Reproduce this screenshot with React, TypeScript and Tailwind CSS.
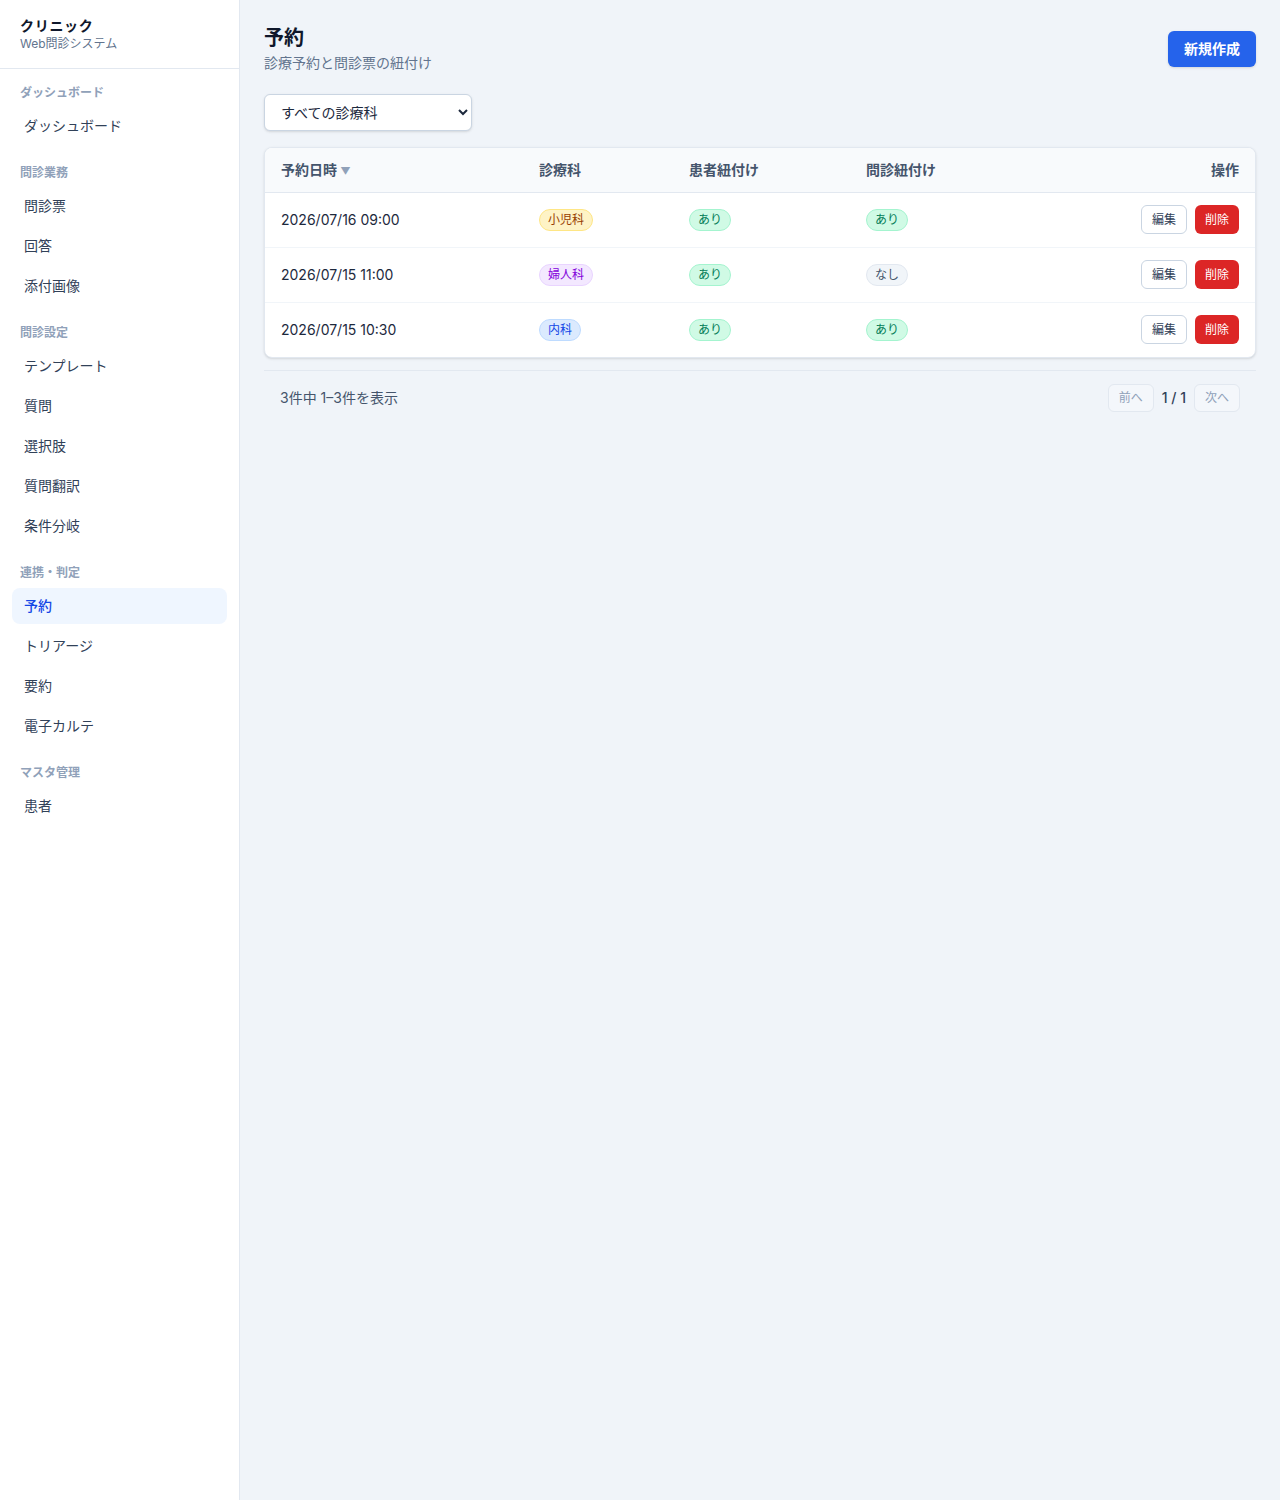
import React from 'react';

type NavSection = { label: string; items: string[] };

const sections: NavSection[] = [
  { label: 'ダッシュボード', items: ['ダッシュボード'] },
  { label: '問診業務', items: ['問診票', '回答', '添付画像'] },
  { label: '問診設定', items: ['テンプレート', '質問', '選択肢', '質問翻訳', '条件分岐'] },
  { label: '連携・判定', items: ['予約', 'トリアージ', '要約', '電子カルテ'] },
  { label: 'マスタ管理', items: ['患者'] },
];

type Dept = '小児科' | '婦人科' | '内科';

const deptStyles: Record<Dept, string> = {
  '小児科': 'bg-amber-100 text-amber-800 border-amber-200',
  '婦人科': 'bg-purple-100 text-purple-700 border-purple-200',
  '内科': 'bg-blue-100 text-blue-700 border-blue-200',
};

const rows: { date: string; dept: Dept; patient: boolean; form: boolean }[] = [
  { date: '2026/07/16 09:00', dept: '小児科', patient: true, form: true },
  { date: '2026/07/15 11:00', dept: '婦人科', patient: true, form: false },
  { date: '2026/07/15 10:30', dept: '内科', patient: true, form: true },
];

function Pill({ className, children }: { className: string; children: React.ReactNode }) {
  return (
    <span className={`inline-flex items-center h-[22px] px-2 rounded-full border text-xs ${className}`}>
      {children}
    </span>
  );
}

function LinkBadge({ on }: { on: boolean }) {
  return on ? (
    <Pill className="bg-emerald-100 text-emerald-700 border-emerald-200">あり</Pill>
  ) : (
    <Pill className="bg-slate-100 text-slate-600 border-slate-200">なし</Pill>
  );
}

function Sidebar() {
  return (
    <aside className="w-[240px] shrink-0 bg-white border-r border-slate-200 min-h-[1500px]">
      <div className="px-5 py-4 border-b border-slate-200">
        <div className="text-sm font-bold text-slate-900 leading-5 tracking-wider">クリニック</div>
        <div className="text-xs text-slate-500 leading-4">Web問診システム</div>
      </div>
      <nav className="px-3 pt-4">
        {sections.map((s, i) => (
          <div key={s.label} className={i === 0 ? '' : 'mt-[21px]'}>
            <div className="px-2 mb-[7px] text-xs leading-4 font-semibold text-slate-400">{s.label}</div>
            {s.items.map((item) => {
              const active = item === '予約';
              return (
                <div
                  key={item}
                  className={`h-9 mb-1 px-3 flex items-center rounded-lg text-sm ${
                    active ? 'bg-blue-50 text-blue-700 font-medium' : 'text-slate-700'
                  }`}
                >
                  {item}
                </div>
              );
            })}
          </div>
        ))}
      </nav>
    </aside>
  );
}

export default function App() {
  return (
    <div
      className="flex w-[1280px] min-h-[1500px] bg-[#f0f4f9]"
      style={{ fontFamily: '"Inter", "Noto Sans CJK JP", sans-serif' }}
    >
      <Sidebar />
      <main className="flex-1 px-6 pt-6">
        <div className="flex items-center justify-between">
          <div>
            <h1 className="text-xl leading-7 font-bold text-slate-900">予約</h1>
            <p className="mt-px text-sm leading-5 text-slate-500">診療予約と問診票の紐付け</p>
          </div>
          <button className="h-9 px-4 rounded-md bg-[#2563eb] text-white text-sm font-semibold shadow-sm">
            新規作成
          </button>
        </div>

        <div className="mt-[21px]">
          <select className="w-[208px] h-[37px] pl-3 pr-2 rounded-md border border-slate-300 bg-white text-sm text-slate-800 shadow-sm">
            <option>すべての診療科</option>
          </select>
        </div>

        <div className="mt-4 bg-white border border-slate-200 rounded-lg shadow-sm overflow-hidden">
          <table className="w-full text-sm">
            <colgroup>
              <col className="w-[258px]" />
              <col className="w-[150px]" />
              <col className="w-[177px]" />
              <col />
              <col />
            </colgroup>
            <thead>
              <tr className="bg-slate-50 border-b border-slate-200 text-slate-600 text-sm font-bold">
                <th className="h-11 px-4 text-left font-bold">
                  予約日時 <span className="text-[10px] text-slate-400">▼</span>
                </th>
                <th className="h-11 px-4 text-left font-bold">診療科</th>
                <th className="h-11 px-4 text-left font-bold">患者紐付け</th>
                <th className="h-11 px-4 text-left font-bold">問診紐付け</th>
                <th className="h-11 px-4 text-right font-bold">操作</th>
              </tr>
            </thead>
            <tbody>
              {rows.map((r, i) => (
                <tr key={r.date} className={i < rows.length - 1 ? 'border-b border-slate-100' : ''}>
                  <td className="h-[55px] px-4 text-slate-800">{r.date}</td>
                  <td className="px-4">
                    <Pill className={deptStyles[r.dept]}>{r.dept}</Pill>
                  </td>
                  <td className="px-4">
                    <LinkBadge on={r.patient} />
                  </td>
                  <td className="px-4">
                    <LinkBadge on={r.form} />
                  </td>
                  <td className="px-4">
                    <div className="flex justify-end gap-2">
                      <button className="h-[29px] px-2.5 rounded-md border border-slate-300 bg-white text-xs text-slate-700">
                        編集
                      </button>
                      <button className="h-[29px] px-2.5 rounded-md bg-[#dc2626] text-xs text-white">削除</button>
                    </div>
                  </td>
                </tr>
              ))}
            </tbody>
          </table>
        </div>

        <div className="mt-3 border-t border-slate-200 pt-[13px] px-4 flex items-center justify-between">
          <span className="text-sm text-slate-600">3件中 1–3件を表示</span>
          <div className="flex items-center gap-2">
            <button disabled className="h-7 px-2.5 rounded-md border border-slate-200 bg-[#f4f7fb] text-xs text-slate-400">
              前へ
            </button>
            <span className="text-sm font-medium text-slate-700">1 / 1</span>
            <button disabled className="h-7 px-2.5 rounded-md border border-slate-200 bg-[#f4f7fb] text-xs text-slate-400">
              次へ
            </button>
          </div>
        </div>
      </main>
    </div>
  );
}
